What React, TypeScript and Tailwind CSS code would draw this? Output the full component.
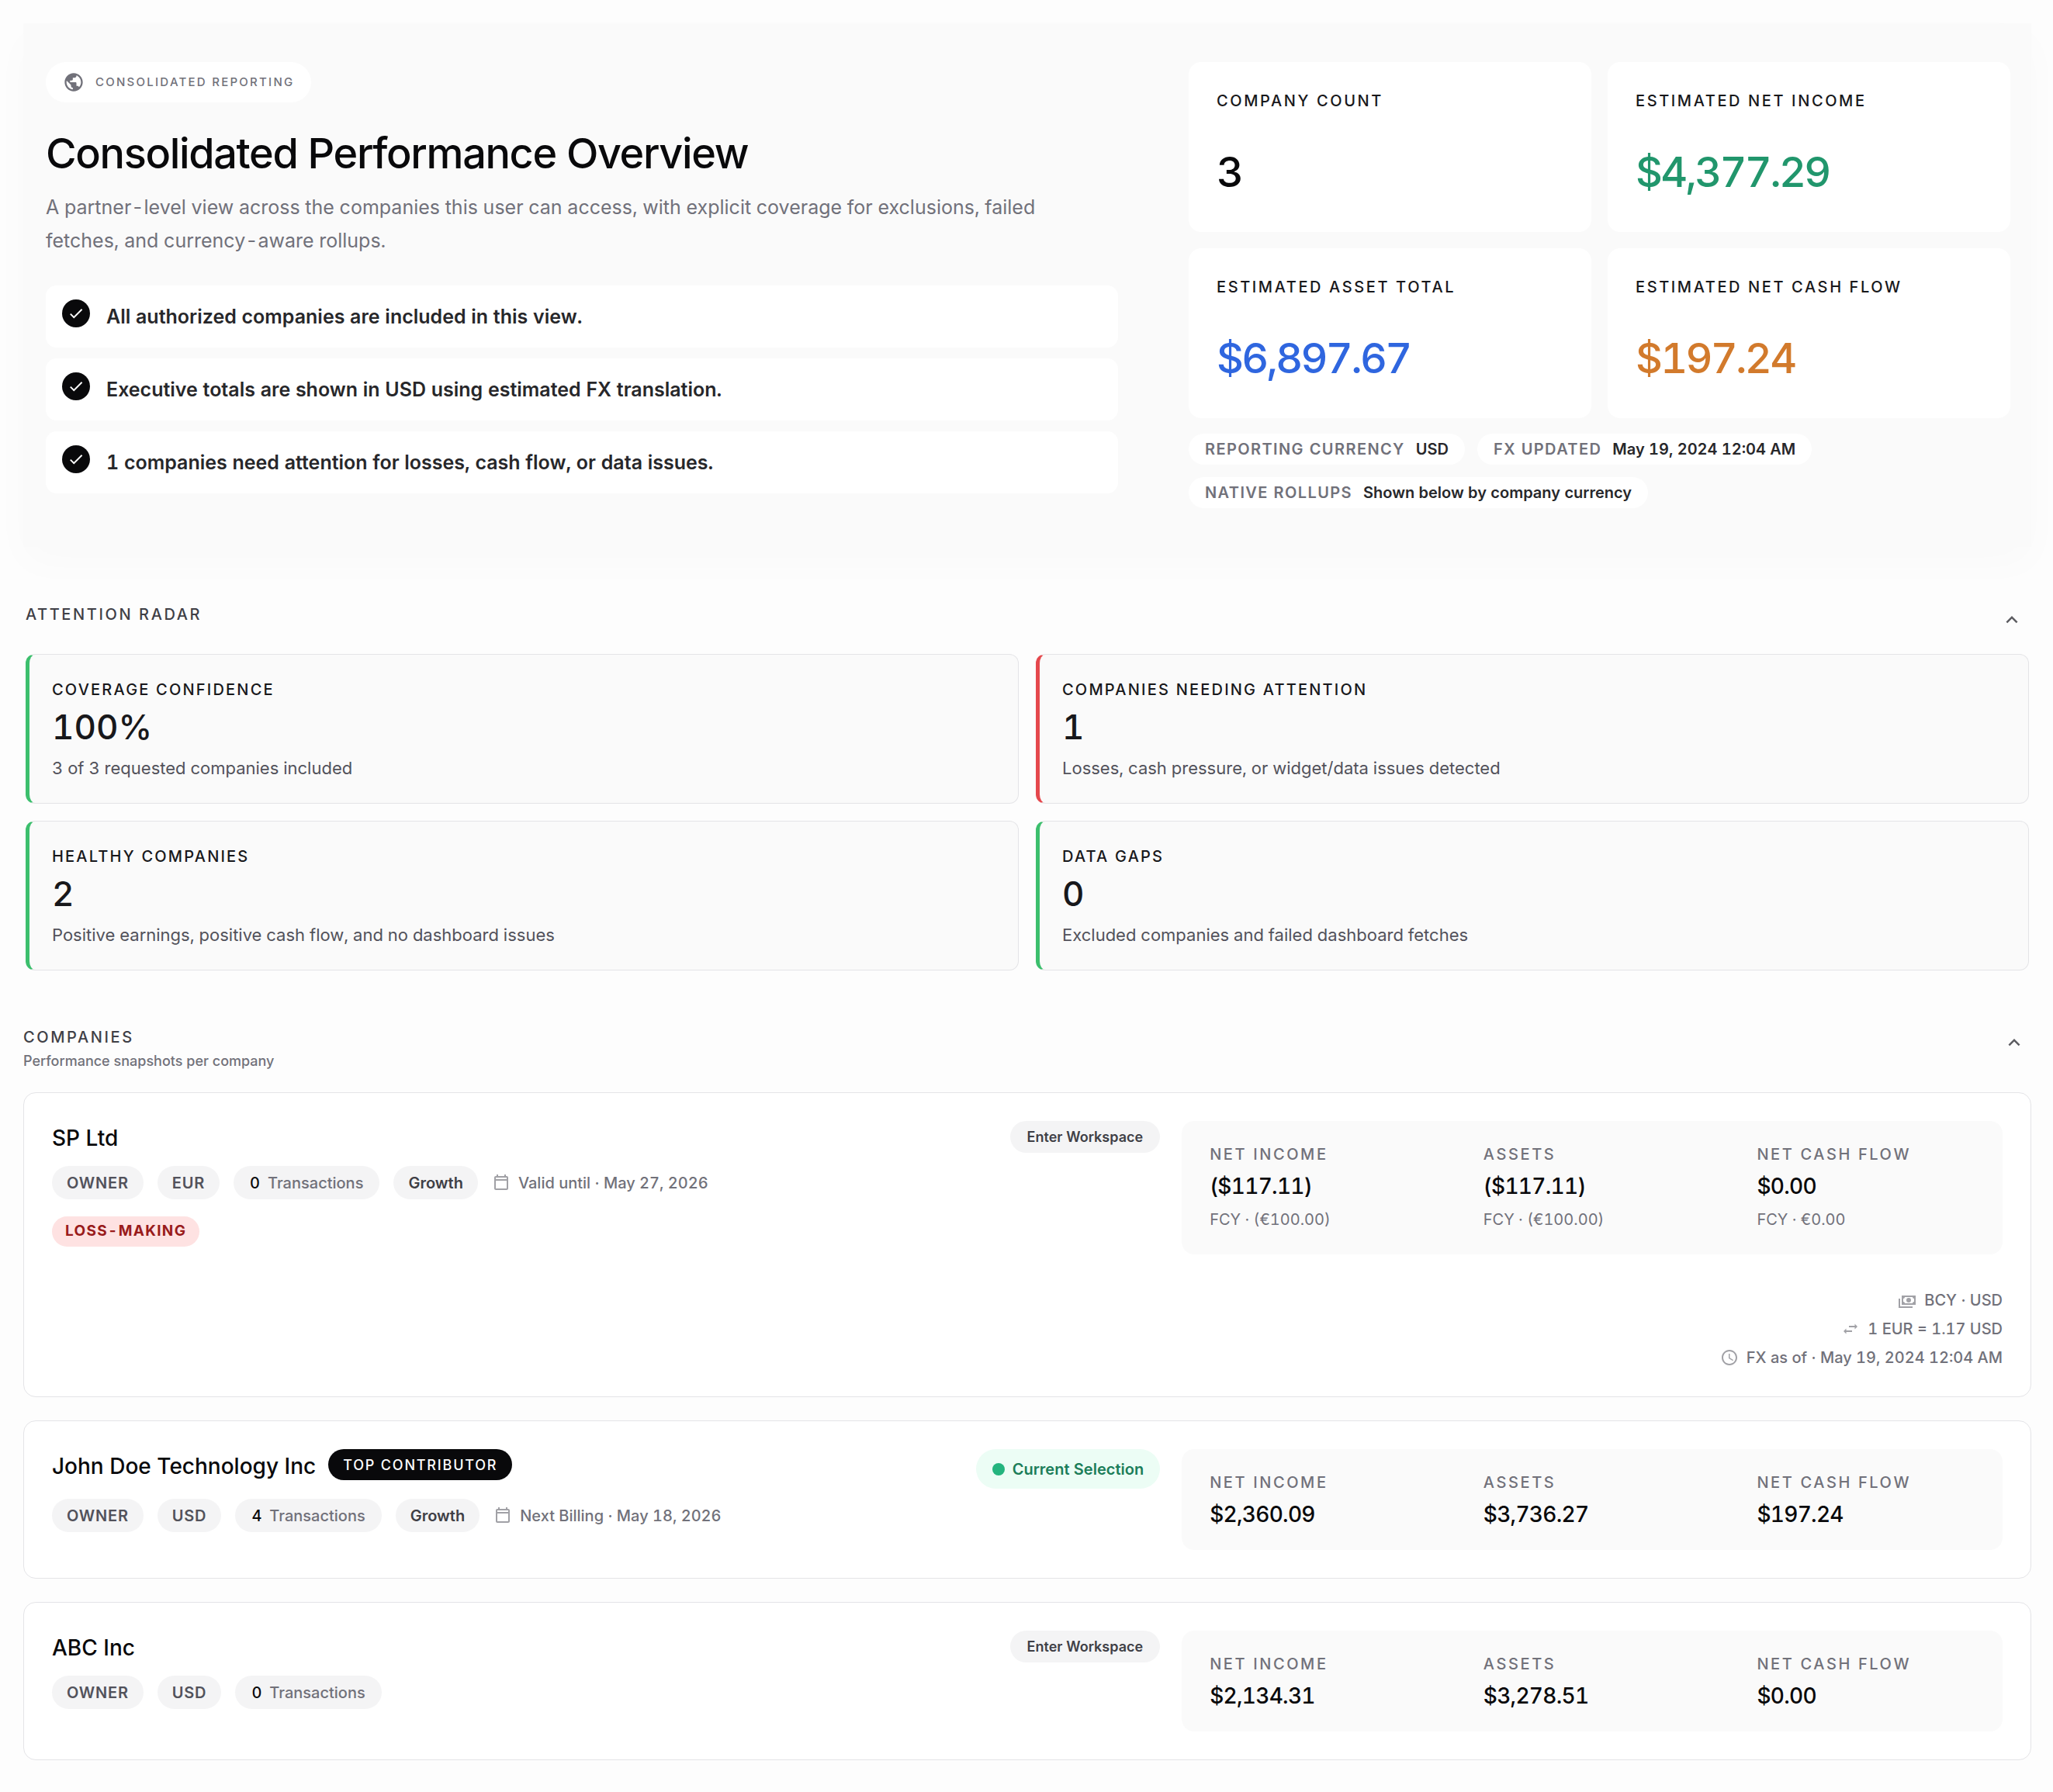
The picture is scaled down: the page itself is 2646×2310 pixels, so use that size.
import type { ReactNode } from "react";
import clsx from "clsx";
import { MdCheck, MdKeyboardArrowUp, MdPublic, MdSchedule } from "react-icons/md";

interface Kpi {
  label: string;
  value: string;
  color: string;
}

interface Signal {
  label: string;
  value: string;
  note: string;
  tone: "good" | "bad";
}

interface Stat {
  label: string;
  value: string;
  foreign?: string;
}

interface Company {
  name: string;
  currency: string;
  transactions: number;
  plan?: string;
  renewal?: string;
  flag?: string;
  top?: boolean;
  current?: boolean;
  stats: Stat[];
  fx?: { base: string; rate: string; asOf: string };
}

const highlights = [
  "All authorized companies are included in this view.",
  "Executive totals are shown in USD using estimated FX translation.",
  "1 companies need attention for losses, cash flow, or data issues.",
];

const kpis: Kpi[] = [
  { label: "Company count", value: "3", color: "text-[#09090b]" },
  { label: "Estimated net income", value: "$4,377.29", color: "text-[#21966c]" },
  { label: "Estimated asset total", value: "$6,897.67", color: "text-[#2f66df]" },
  { label: "Estimated net cash flow", value: "$197.24", color: "text-[#d27a2c]" },
];

const reportMeta = [
  { label: "Reporting currency", value: "USD" },
  { label: "FX updated", value: "May 19, 2024 12:04 AM" },
  { label: "Native rollups", value: "Shown below by company currency" },
];

const signals: Signal[] = [
  { label: "Coverage confidence", value: "100%", note: "3 of 3 requested companies included", tone: "good" },
  { label: "Companies needing attention", value: "1", note: "Losses, cash pressure, or widget/data issues detected", tone: "bad" },
  { label: "Healthy companies", value: "2", note: "Positive earnings, positive cash flow, and no dashboard issues", tone: "good" },
  { label: "Data gaps", value: "0", note: "Excluded companies and failed dashboard fetches", tone: "good" },
];

const companies: Company[] = [
  {
    name: "SP Ltd",
    currency: "EUR",
    transactions: 0,
    plan: "Growth",
    renewal: "Valid until · May 27, 2026",
    flag: "Loss-making",
    stats: [
      { label: "Net income", value: "($117.11)", foreign: "FCY · (€100.00)" },
      { label: "Assets", value: "($117.11)", foreign: "FCY · (€100.00)" },
      { label: "Net cash flow", value: "$0.00", foreign: "FCY · €0.00" },
    ],
    fx: { base: "BCY · USD", rate: "1 EUR = 1.17 USD", asOf: "FX as of · May 19, 2024 12:04 AM" },
  },
  {
    name: "John Doe Technology Inc",
    currency: "USD",
    transactions: 4,
    plan: "Growth",
    renewal: "Next Billing · May 18, 2026",
    top: true,
    current: true,
    stats: [
      { label: "Net income", value: "$2,360.09" },
      { label: "Assets", value: "$3,736.27" },
      { label: "Net cash flow", value: "$197.24" },
    ],
  },
  {
    name: "ABC Inc",
    currency: "USD",
    transactions: 0,
    stats: [
      { label: "Net income", value: "$2,134.31" },
      { label: "Assets", value: "$3,278.51" },
      { label: "Net cash flow", value: "$0.00" },
    ],
  },
];

function CalendarIcon() {
  return (
    <svg viewBox="0 0 24 24" fill="currentColor" aria-hidden="true" className="size-6 shrink-0 text-[#a1a1a6]">
      <path d="M19 3h-1V1h-2v2H8V1H6v2H5c-1.11 0-2 .9-2 2v14c0 1.11.9 2 2 2h14c1.11 0 2-.89 2-2V5c0-1.1-.89-2-2-2m0 16H5V9h14v10m0-12H5V5h14v2Z" />
    </svg>
  );
}

function CashIcon() {
  return (
    <svg viewBox="0 0 24 24" fill="currentColor" aria-hidden="true" className="size-6 shrink-0 text-[#a1a1a6]">
      <path d="M5 6h18v12H5V6m9 3a3 3 0 0 1 3 3 3 3 0 0 1-3 3 3 3 0 0 1-3-3 3 3 0 0 1 3-3M9 8a2 2 0 0 1-2 2v4a2 2 0 0 1 2 2h10a2 2 0 0 1 2-2v-4a2 2 0 0 1-2-2H9m-8 2h2v10h16v2H1V10Z" />
    </svg>
  );
}

function SwapIcon() {
  return (
    <svg viewBox="0 0 24 24" fill="currentColor" aria-hidden="true" className="size-6 shrink-0 text-[#a1a1a6]">
      <path d="M21 9l-3.500-3.500V8H10v2h7.500v2.500L21 9M6.500 11.500 3 15l3.500 3.500V16H14v-2H6.500v-2.500Z" />
    </svg>
  );
}

function Chip({ children, className }: { children: ReactNode; className?: string }) {
  return <span className={clsx("flex h-[43px] items-center rounded-full bg-[#f4f4f5]", className)}>{children}</span>;
}

function CollapseButton({ label }: { label: string }) {
  return (
    <button type="button" aria-label={label} className="flex size-11 items-center justify-center rounded-full text-[#5b5b60]">
      <MdKeyboardArrowUp aria-hidden="true" className="size-[30px]" />
    </button>
  );
}

function Hero() {
  return (
    <section className="grid grid-cols-[1.305fr_1fr] gap-[91px] bg-[#fafafa] py-[50px] pr-[27px] pl-[29px] shadow-[0_20px_50px_rgba(0,0,0,0.02)]">
      <div>
        <p className="flex h-[52px] w-fit items-center gap-3.5 rounded-full bg-white px-[22px] text-[15px] font-medium tracking-[0.15em] text-[#71717a] uppercase">
          <MdPublic aria-hidden="true" className="size-7" />
          Consolidated reporting
        </p>
        <h1 className="mt-[35px] text-[54px] leading-[62px] font-medium tracking-tight text-[#09090b]">
          Consolidated Performance Overview
        </h1>
        <p className="mt-[17px] max-w-[1320px] text-[25px] leading-[43px] text-[#71717a]">
          A partner-level view across the companies this user can access, with explicit coverage for exclusions, failed
          fetches, and currency-aware rollups.
        </p>
        <ul className="mt-9 flex flex-col gap-3.5">
          {highlights.map((text) => (
            <li key={text} className="flex items-start gap-[21px] rounded-[14px] bg-white px-[21px] py-[18px]">
              <span className="flex size-9 shrink-0 items-center justify-center rounded-full bg-[#09090b] text-white">
                <MdCheck aria-hidden="true" className="size-[22px]" />
              </span>
              <span className="text-[25px] leading-[44px] font-semibold text-[#27272a]">{text}</span>
            </li>
          ))}
        </ul>
      </div>

      <div>
        <dl className="grid grid-cols-2 gap-[21px]">
          {kpis.map((kpi) => (
            <div key={kpi.label} className="rounded-2xl bg-white px-9 pt-9 pb-[43px]">
              <dt className="text-[20px] leading-7 font-medium tracking-[0.13em] text-[#18181b] uppercase">{kpi.label}</dt>
              <dd className={clsx("mt-11 text-[54px] leading-[68px] font-medium tracking-tighter", kpi.color)}>{kpi.value}</dd>
            </div>
          ))}
        </dl>
        <ul className="mt-5 flex flex-wrap gap-4">
          {reportMeta.map((item) => (
            <li key={item.label} className="flex h-10 items-center gap-3.5 rounded-full bg-white px-[21px] text-[20px]">
              <span className="font-semibold tracking-[0.07em] text-[#71717a] uppercase">{item.label}</span>
              <span className="font-semibold text-[#27272a]">{item.value}</span>
            </li>
          ))}
        </ul>
      </div>
    </section>
  );
}

function AttentionRadar() {
  return (
    <section className="mt-[72px] px-[3px]">
      <div className="flex items-start justify-between">
        <h2 className="text-[20px] leading-[30px] font-medium tracking-[0.13em] text-[#3f3f46] uppercase">Attention radar</h2>
        <CollapseButton label="Collapse attention radar" />
      </div>
      <div className="mt-[22px] grid grid-cols-2 gap-[22px]">
        {signals.map((signal) => (
          <article
            key={signal.label}
            className={clsx(
              "rounded-xl border border-l-[5px] border-[#e4e4e7] bg-[#fafafa] px-[29px] pt-[31px] pb-[29px]",
              signal.tone === "good" ? "border-l-[#3cbf6d]" : "border-l-[#e5484d]",
            )}
          >
            <h3 className="text-[20px] leading-7 font-medium tracking-[0.11em] text-[#18181b] uppercase">{signal.label}</h3>
            <p className="mt-2 text-[44px] leading-[52px] font-medium text-[#18181b]">{signal.value}</p>
            <p className="mt-[11px] text-[22px] leading-8 text-[#52525b]">{signal.note}</p>
          </article>
        ))}
      </div>
    </section>
  );
}

function CompanyCard({ company }: { company: Company }) {
  return (
    <article className="grid grid-cols-[1.35fr_1fr] gap-7 rounded-2xl border border-[#e4e4e7] bg-white p-9">
      <div className="flex items-start justify-between">
        <div>
          <div className="flex items-start gap-4">
            <h3 className="text-[28px] leading-[44px] font-medium text-[#09090b]">{company.name}</h3>
            {company.top ? (
              <span className="mb-2.5 flex h-10 items-center rounded-full bg-[#09090b] px-[19px] text-[18px] font-medium tracking-widest text-white uppercase">
                Top contributor
              </span>
            ) : null}
          </div>
          <div className="mt-3.5 flex flex-wrap items-center gap-[18px] text-[20px]">
            <Chip className="px-[19px] font-semibold tracking-[0.04em] text-[#52525b] uppercase">Owner</Chip>
            <Chip className="px-[19px] font-semibold tracking-[0.04em] text-[#52525b] uppercase">{company.currency}</Chip>
            <Chip className="gap-2.5 px-[21px] font-medium text-[#71717a]">
              <span className="text-[#09090b]">{company.transactions}</span>
              Transactions
            </Chip>
            {company.plan ? <Chip className="px-[19px] font-semibold text-[#3f3f46]">{company.plan}</Chip> : null}
            {company.renewal ? (
              <span className="flex items-center gap-2.5 font-medium text-[#71717a]">
                <CalendarIcon />
                {company.renewal}
              </span>
            ) : null}
          </div>
          {company.flag ? (
            <p className="mt-[22px] flex h-[39px] w-fit items-center rounded-full bg-[#fee2e2] px-[17px] text-[19px] font-bold tracking-[0.07em] text-[#991b1b] uppercase">
              {company.flag}
            </p>
          ) : null}
        </div>
        {company.current ? (
          <span className="flex h-[51px] items-center gap-2.5 rounded-full bg-[#ecfdf5] px-[21px] text-[20px] font-semibold text-[#1b7d59]">
            <span className="size-4 rounded-full bg-[#24b47e]" />
            Current Selection
          </span>
        ) : (
          <button type="button" className="h-[41px] rounded-full bg-[#f4f4f5] px-[22px] text-[18px] font-semibold text-[#3f3f46]">
            Enter Workspace
          </button>
        )}
      </div>

      <div>
        <dl className="grid grid-cols-3 rounded-2xl bg-[#fafafa] py-7">
          {company.stats.map((stat) => (
            <div key={stat.label} className="px-9">
              <dt className="text-[20px] leading-[30px] font-medium tracking-[0.13em] text-[#71717a] uppercase">{stat.label}</dt>
              <dd className="mt-2 text-[28px] leading-9 font-medium tracking-tight text-[#09090b]">{stat.value}</dd>
              {stat.foreign ? <dd className="mt-2 text-[20px] leading-[34px] text-[#71717a]">{stat.foreign}</dd> : null}
            </div>
          ))}
        </dl>
        {company.fx ? (
          <ul className="mt-[45px] flex flex-col items-end gap-[9px] text-[20px] leading-7 font-medium text-[#71717a]">
            <li className="flex items-center gap-2.5">
              <CashIcon />
              {company.fx.base}
            </li>
            <li className="flex items-center gap-2.5">
              <SwapIcon />
              {company.fx.rate}
            </li>
            <li className="flex items-center gap-2.5">
              <MdSchedule aria-hidden="true" className="size-6 text-[#a1a1a6]" />
              {company.fx.asOf}
            </li>
          </ul>
        ) : null}
      </div>
    </article>
  );
}

export default function App() {
  return (
    <main className="min-h-screen bg-[#fdfdfd] pt-[30px] pr-7 pb-10 pl-[30px] font-['Inter',sans-serif] tabular-nums">
      <Hero />
      <AttentionRadar />
      <section className="mt-[71px]">
        <div className="flex items-start justify-between">
          <div>
            <h2 className="text-[20px] leading-[30px] font-medium tracking-[0.13em] text-[#3f3f46] uppercase">Companies</h2>
            <p className="mt-0.5 text-[18px] leading-7 font-medium text-[#71717a]">Performance snapshots per company</p>
          </div>
          <CollapseButton label="Collapse companies" />
        </div>
        <div className="mt-[26px] flex flex-col gap-[30px]">
          {companies.map((company) => (
            <CompanyCard key={company.name} company={company} />
          ))}
        </div>
      </section>
    </main>
  );
}
